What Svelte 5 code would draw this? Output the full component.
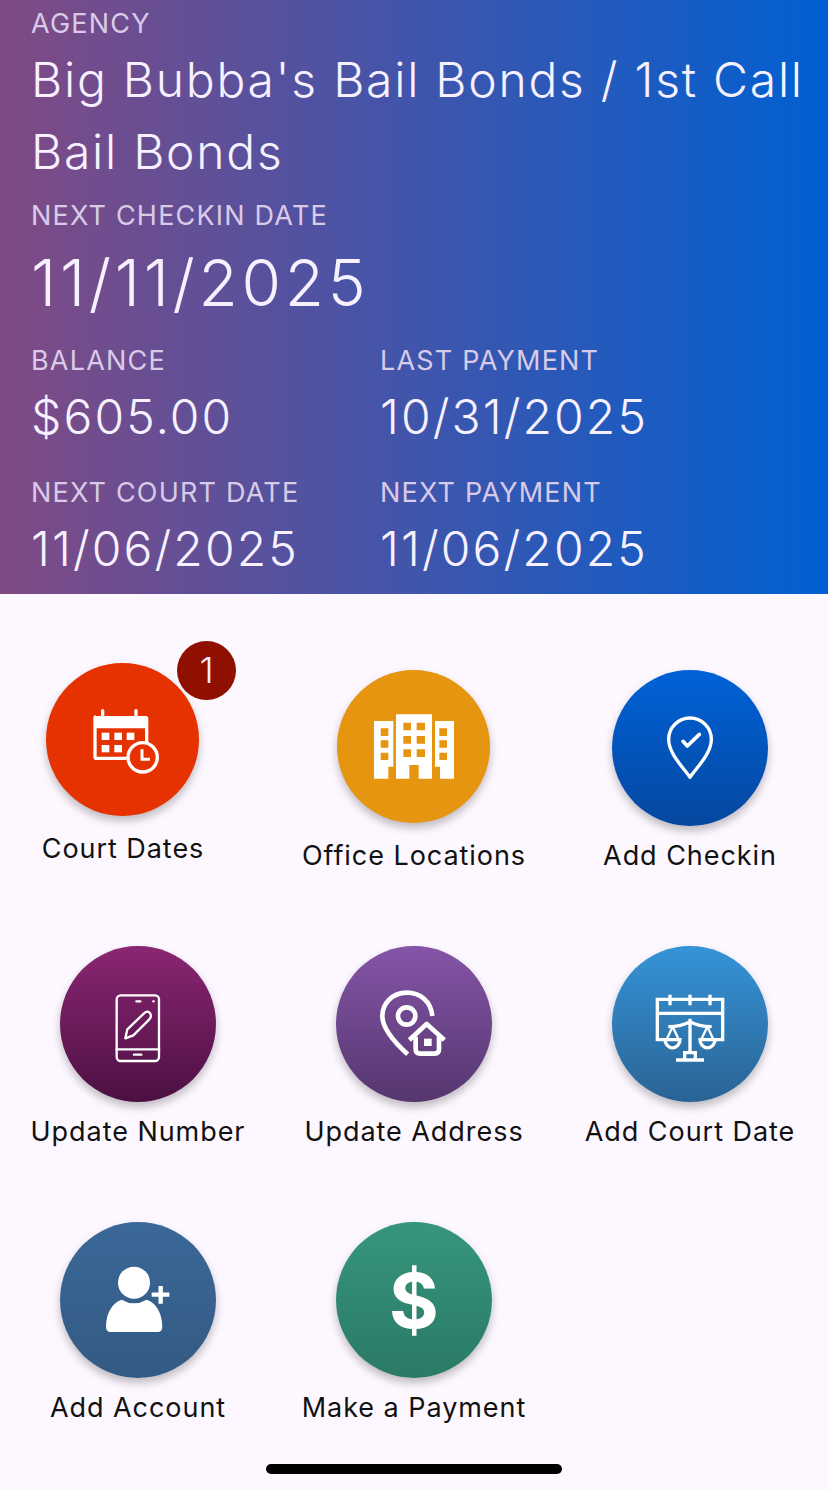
<script>
  const stats = [
    { label: 'BALANCE', value: '$605.00' },
    { label: 'LAST PAYMENT', value: '10/31/2025' },
    { label: 'NEXT COURT DATE', value: '11/06/2025' },
    { label: 'NEXT PAYMENT', value: '11/06/2025' }
  ];
</script>

<div class="screen">
  <header class="summary">
    <div class="label">AGENCY</div>
    <div class="agency">Big Bubba's Bail Bonds / 1st Call Bail Bonds</div>
    <div class="label">NEXT CHECKIN DATE</div>
    <div class="checkin">11/11/2025</div>
    <div class="stats">
      {#each stats as s}
        <div class="stat">
          <div class="label">{s.label}</div>
          <div class="value">{s.value}</div>
        </div>
      {/each}
    </div>
  </header>

  <main class="grid">
    <div class="tile court">
      <div class="circle small red">
        <svg viewBox="78 99 459 459">
          <g fill="#fff">
            <path d="M228 258h15v-16a5 5 0 0 1 10 0v16h90v-16a5 5 0 0 1 10 0v16h24a8 8 0 0 1 8 8v70h-10v-41h-145v85h90v10h-90a10 10 0 0 1-10-10v-116a8 8 0 0 1 8-8z"/>
            <rect x="245" y="308" width="23" height="22"/>
            <rect x="283" y="308" width="23" height="22"/>
            <rect x="320" y="308" width="23" height="22"/>
            <rect x="245" y="345" width="23" height="22"/>
            <rect x="283" y="345" width="23" height="22"/>
          </g>
          <circle cx="368" cy="382" r="44" fill="none" stroke="#fff" stroke-width="10"/>
          <path d="M366 358v30h24" fill="none" stroke="#fff" stroke-width="9"/>
        </svg>
        <span class="badge">1</span>
      </div>
      <div class="name">Court Dates</div>
    </div>

    <div class="tile">
      <div class="circle small orange">
        <svg viewBox="51 30 459 459">
          <path fill="#fff" fill-rule="evenodd" d="M162 183h58v137h-15v36h-43z M182 205v23h23v-23z M182 241v22h23v-22z M182 278v22h23v-22z M228 163h108v193h-40v-41h-28v41h-40z M250 188v23h23v-23z M290 188v23h25v-23z M250 228v23h23v-23z M290 228v23h25v-23z M250 268v23h23v-23z M290 268v23h25v-23z M345 183h57v173h-42v-36h-15z M358 205v23h23v-23z M358 241v22h23v-22z M358 278v22h23v-22z"/>
        </svg>
      </div>
      <div class="name">Office Locations</div>
    </div>

    <div class="tile">
      <div class="circle blue">
        <svg viewBox="36 30 468 468" fill="none" stroke="#fff" stroke-linecap="round" stroke-linejoin="round">
          <path stroke-width="10" d="M270 352C246 318 206 280 206 238a64 64 0 0 1 128 0C334 280 294 318 270 352z"/>
          <path stroke-width="11" d="M249 244l13 14 36-35"/>
        </svg>
      </div>
      <div class="name">Add Checkin</div>
    </div>

    <div class="tile">
      <div class="circle plum">
        <svg viewBox="30 30 468 468" fill="none" stroke="#fff" stroke-width="7" stroke-linecap="round" stroke-linejoin="round">
          <rect x="200" y="178" width="127" height="197" rx="12"/>
          <path d="M200 340h127"/>
          <path d="M252 356h22M259 196h12M310 196h1"/>
          <path d="M226 307l6-27 50-48c8-7 14-6 18 0 4 5 4 11-2 18l-48 48z"/>
        </svg>
      </div>
      <div class="name">Update Number</div>
    </div>

    <div class="tile">
      <div class="circle purple">
        <svg viewBox="33 30 468 468" fill="none" stroke="#fff" stroke-width="14" stroke-linejoin="round">
          <path d="M322 240C318 195 285 170 245 170C200 170 172 205 172 240C172 280 215 325 248 355"/>
          <circle cx="245" cy="240" r="26"/>
          <path d="M253 312L305 264L358 312"/>
          <path d="M272 302V340Q272 353 285 353H329Q342 353 342 340V302"/>
          <rect x="297" y="308" width="23" height="22" fill="#fff" stroke="none"/>
        </svg>
      </div>
      <div class="name">Update Address</div>
    </div>

    <div class="tile">
      <div class="circle sky">
        <svg viewBox="36 30 468 468" fill="none" stroke="#fff" stroke-width="10">
          <path d="M195 311H172V190H368V311H345"/>
          <path d="M172 232H368M210 176V208M270 176V208M330 176V208"/>
          <path d="M270 248V350M205 272Q245 272 270 257Q295 272 335 272"/>
          <path d="M218 272L200 310M218 272L236 310M322 272L304 310M322 272L340 310" stroke-width="7"/>
          <path d="M195 311H240a22 24 0 0 1-45 0zM300 311H345a22 24 0 0 1-45 0z"/>
          <path d="M254 370V350H286V370M228 372H312"/>
        </svg>
      </div>
      <div class="name">Add Court Date</div>
    </div>

    <div class="tile">
      <div class="circle steel">
        <svg viewBox="30 30 468 468" fill="#fff">
          <circle cx="252" cy="212" r="48"/>
          <path d="M168 345C168 300 190 270 215 263Q252 285 290 263C315 270 337 300 337 345Q337 360 322 360H183Q168 360 168 345Z"/>
          <path d="M332 222V275M305 248H358" fill="none" stroke="#fff" stroke-width="13"/>
        </svg>
      </div>
      <div class="name">Add Account</div>
    </div>

    <div class="tile">
      <div class="circle green">
        <span class="dollar">$</span>
      </div>
      <div class="name">Make a Payment</div>
    </div>
  </main>

  <div class="home-bar"></div>
</div>

<style>
  :global(body) {
    margin: 0;
    background: #fdf8ff;
  }
  .screen {
    position: relative;
    width: 828px;
    height: 1490px;
    overflow: hidden;
    font-family: Inter, "Liberation Sans", sans-serif;
    background: #fdf8ff;
  }
  .summary {
    box-sizing: border-box;
    height: 594px;
    padding: 8px 20px 0 31px;
    color: #f6f0ff;
    background: linear-gradient(90deg, #804a84 0%, #0060d2 100%);
  }
  .label {
    font-size: 27px;
    line-height: 32px;
    letter-spacing: 1.2px;
    color: #d9cbe8;
  }
  .agency {
    font-size: 48px;
    line-height: 72px;
    letter-spacing: 1.75px;
    font-weight: 300;
    margin: 4px 0 12px;
  }
  .checkin {
    font-size: 64px;
    line-height: 84px;
    letter-spacing: 3.7px;
    font-weight: 300;
    margin: 9px 0 20px;
  }
  .stats {
    display: grid;
    grid-template-columns: 349px 1fr;
    row-gap: 0;
  }
  .stat .value {
    font-size: 48px;
    line-height: 68px;
    letter-spacing: 2.1px;
    font-weight: 300;
    margin: 6px 0 26px;
  }
  .grid {
    display: grid;
    grid-template-columns: repeat(3, 276px);
    grid-auto-rows: 276px;
    padding-top: 76px;
  }
  .tile {
    display: flex;
    flex-direction: column;
    align-items: center;
  }
  .tile.court {
    margin-top: -7px;
    padding-right: 30px;
  }
  .circle {
    position: relative;
    display: flex;
    align-items: center;
    justify-content: center;
    width: 156px;
    height: 156px;
    border-radius: 50%;
    box-shadow: 0 5px 8px rgba(0, 0, 0, 0.25);
  }
  .circle.small {
    width: 153px;
    height: 153px;
    margin-left: -1px;
  }
  .small + .name {
    margin-top: 17px;
  }
  .circle svg {
    display: block;
    width: 100%;
    height: 100%;
  }
  .red { background: #e63200; }
  .orange { background: #e69510; }
  .blue { background: linear-gradient(180deg, #0062d8, #05479f); }
  .plum { background: linear-gradient(180deg, #8b2673, #4c1042); }
  .purple { background: linear-gradient(180deg, #8555a8, #55366e); }
  .sky { background: linear-gradient(180deg, #3594d8, #2a6394); }
  .steel { background: linear-gradient(180deg, #3a6898, #335a82); }
  .green { background: linear-gradient(180deg, #36957e, #2a7a66); }
  .badge {
    position: absolute;
    top: -22px;
    right: -37px;
    width: 59px;
    height: 59px;
    border-radius: 50%;
    background: #8f1000;
    color: #f5eeff;
    font-size: 36px;
    font-weight: 300;
    line-height: 59px;
    text-align: center;
  }
  .name {
    margin-top: 14px;
    font-size: 27px;
    line-height: 32px;
    letter-spacing: 0.95px;
    color: #111;
    white-space: nowrap;
  }
  .dollar {
    font-size: 76px;
    font-weight: 700;
    line-height: 1;
    color: #fff;
  }
  .home-bar {
    position: absolute;
    left: 266px;
    top: 1464px;
    width: 296px;
    height: 10px;
    border-radius: 5px;
    background: #000;
  }
</style>
